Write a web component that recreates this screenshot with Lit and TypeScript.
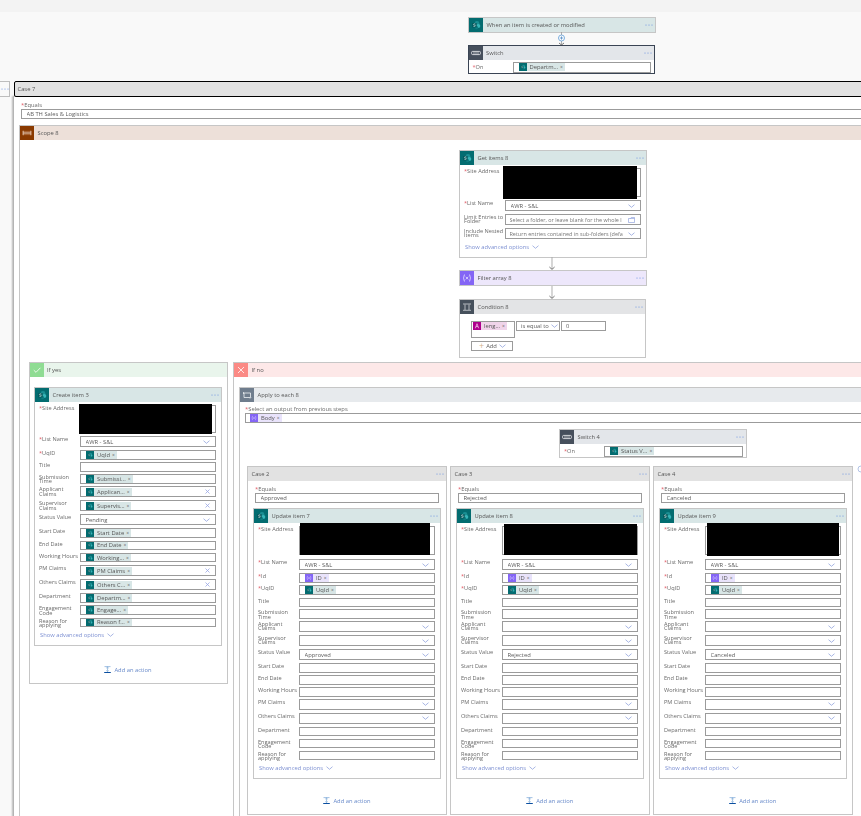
import { LitElement, html, css, nothing } from "lit";
import { customElement } from "lit/decorators.js";

const dots = html`<svg class="dots" width="8" height="2" viewBox="0 0 8 2"><circle cx="1" cy="1" r=".55"/><circle cx="4" cy="1" r=".55"/><circle cx="7" cy="1" r=".55"/></svg>`;
const chev = html`<svg class="chev" width="7" height="4" viewBox="0 0 7 4"><path d="M.5.7 3.5 3.3 6.5.7" fill="none" stroke="#8296d8" stroke-width=".7"/></svg>`;
const clear = html`<svg class="chev" width="5" height="5" viewBox="0 0 5 5"><path d="M.5.5 4.5 4.5M4.5.5.5 4.5" fill="none" stroke="#98a6e4" stroke-width=".8"/></svg>`;
const folder = html`<svg class="chev" width="7" height="6" viewBox="0 0 7 6"><path d="M.5 5.5V1.5H6.5V5.5ZM2.5 1.5 3.2.5H6.5V1.5" fill="none" stroke="#8296d8" stroke-width=".6"/></svg>`;

const spIcon = (s: number) => html`<svg class="ic" width="${s}" height="${s}" viewBox="0 0 14 14">
  <rect width="14" height="14" fill="#036c70"/>
  <circle cx="8" cy="5.5" r="2.4" fill="#1b8f93"/><circle cx="9.3" cy="8" r="2" fill="#37b5b8"/><circle cx="7.6" cy="9.6" r="1.6" fill="#0f7c80"/>
  <rect x="3.2" y="5" width="4.4" height="4.4" fill="#04585c"/><path d="M6.4 6C5.8 5.6 4.5 5.7 4.5 6.4 4.5 7.2 6.4 6.9 6.4 7.8 6.4 8.5 5 8.6 4.3 8.2" fill="none" stroke="#e8f4f4" stroke-width=".6"/></svg>`;
const fxIcon = (s: number) => html`<svg class="ic" width="${s}" height="${s}" viewBox="0 0 14 14"><rect width="14" height="14" fill="#8465f5"/>
  <path d="M5 3.5C3.8 3.5 4.2 6.2 3.4 7 4.2 7.8 3.8 10.5 5 10.5M9 3.5C10.2 3.5 9.8 6.2 10.6 7 9.8 7.8 10.2 10.5 9 10.5M5.8 5.8 8.2 8.4M8.2 5.8 5.8 8.4" fill="none" stroke="#e9e2ff" stroke-width=".8"/></svg>`;
const exprIcon = (s: number) => html`<svg class="ic" width="${s}" height="${s}" viewBox="0 0 14 14"><rect width="14" height="14" fill="#ad008c"/><path d="M4 11 7 3 10 11M5.2 8H8.8" fill="none" stroke="#f7d8ef" stroke-width="1.2"/></svg>`;
const switchIcon = html`<svg class="ic" width="14" height="14" viewBox="0 0 14 14"><rect width="14" height="14" fill="#464f5c"/><rect x="2.6" y="5.4" width="8.8" height="3.2" rx="1" fill="none" stroke="#f2f3f5" stroke-width=".8"/><path d="M5 5.6V8.4M7 5.6V8.4M9 5.6V8.4" stroke="#f2f3f5" stroke-width=".6"/></svg>`;
const scopeIcon = html`<svg class="ic" width="14" height="14" viewBox="0 0 14 14"><rect width="14" height="14" fill="#8a3a00"/><path d="M3.2 4.8V9.2M10.8 4.8V9.2M3.2 7H10.8" fill="none" stroke="#f1dfd2" stroke-width="1"/><rect x="3.2" y="5.2" width="7.6" height="3.6" fill="none" stroke="#c9966f" stroke-width=".5"/></svg>`;
const condIcon = html`<svg class="ic" width="14" height="14" viewBox="0 0 14 14"><rect width="14" height="14" fill="#46505c"/><path d="M3 4H11M3 10.3H11M5 4.5V10M9 4.5V10" fill="none" stroke="#cfd3d8" stroke-width=".8"/></svg>`;
const loopIcon = html`<svg class="ic" width="14" height="14" viewBox="0 0 14 14"><rect width="14" height="14" fill="#6f7d8d"/><path d="M4 5H10.5V9.5H4V5M3 6 4 5 3 4M10 10.5 11 9.5" fill="none" stroke="#eef1f4" stroke-width=".8"/></svg>`;
const yesIcon = html`<svg class="ic" width="14" height="14" viewBox="0 0 14 14"><rect width="14" height="14" fill="#8fdc93"/><path d="M3.8 7.2 6 9.3 10.4 4.8" fill="none" stroke="#f2fbf2" stroke-width=".9"/></svg>`;
const noIcon = html`<svg class="ic" width="14" height="14" viewBox="0 0 14 14"><rect width="14" height="14" fill="#fb8a85"/><path d="M4 4 10 10M10 4 4 10" fill="none" stroke="#fff2f1" stroke-width=".9"/></svg>`;
const addIcon = html`<svg width="7" height="7" viewBox="0 0 7 7"><path d="M.5 .6H6.5" stroke="#7aa6d8" stroke-width=".7"/><path d="M3.5 1V5.6M2.2 4.4 3.5 5.6 4.8 4.4M2.2 2.2 3.5 1 4.8 2.2" fill="none" stroke="#6f9fd2" stroke-width=".6"/><path d="M.2 6.5H6.8" stroke="#0b4fa0" stroke-width="1"/></svg>`;

type Row = [string, "in" | "dd" | "ddx" | "folder" | "ph", boolean, string?, string?, string?];

const updateRows = (status: string): Row[] => [
  ["List Name", "dd", true, "AWR - S&L"],
  ["Id", "in", true, undefined, "ID", "fx"],
  ["UqID", "in", true, undefined, "UqId", "sp"],
  ["Title", "in", false],
  ["Submission\nTime", "in", false],
  ["Applicant\nClaims", "dd", false],
  ["Supervisor\nClaims", "dd", false],
  ["Status Value", "dd", false, status],
  ["Start Date", "in", false],
  ["End Date", "in", false],
  ["Working Hours", "in", false],
  ["PM Claims", "dd", false],
  ["Others Claims", "dd", false],
  ["Department", "in", false],
  ["Engagement\nCode", "in", false],
  ["Reason for\napplying", "in", false],
];
const createRows: Row[] = [
  ["List Name", "dd", true, "AWR - S&L"],
  ["UqID", "in", true, undefined, "UqId", "sp"],
  ["Title", "in", false],
  ["Submission\nTime", "in", false, undefined, "Submissi...", "sp"],
  ["Applicant\nClaims", "ddx", false, undefined, "Applican...", "sp"],
  ["Supervisor\nClaims", "ddx", false, undefined, "Supervis...", "sp"],
  ["Status Value", "dd", false, "Pending"],
  ["Start Date", "in", false, undefined, "Start Date", "sp"],
  ["End Date", "in", false, undefined, "End Date", "sp"],
  ["Working Hours", "in", false, undefined, "Working...", "sp"],
  ["PM Claims", "ddx", false, undefined, "PM Claims", "sp"],
  ["Others Claims", "ddx", false, undefined, "Others C...", "sp"],
  ["Department", "in", false, undefined, "Departm...", "sp"],
  ["Engagement\nCode", "in", false, undefined, "Engage...", "sp"],
  ["Reason for\napplying", "in", false, undefined, "Reason f...", "sp"],
];
const getRows: Row[] = [
  ["List Name", "dd", true, "AWR - S&L"],
  ["Limit Entries to\nFolder", "folder", false, "Select a folder, or leave blank for the whole l"],
  ["Include Nested\nItems", "ph", false, "Return entries contained in sub-folders (defa"],
];

const token = (text: string, kind = "sp") => html`<span class="tk ${kind}">${kind === "sp" ? spIcon(8) : kind === "fx" ? fxIcon(8) : exprIcon(8)}<span class="tt">${text}</span><span class="tx">×</span></span>`;
const ttl = (t: string) => html`<span class="ttl">${t}</span>`;

const pos = (x: number, y: number, w: number, h?: number) =>
  `left:${x}px;top:${y}px;width:${w}px;${h ? `height:${h}px` : ""}`;

@customElement("app-root")
export class AppRoot extends LitElement {
  static styles = css`
    :host { display: block; width: 861px; height: 816px; overflow: hidden; font-family: "Open Sans", "Noto Sans", sans-serif; font-size: 5.8px; color: #555; }
    .canvas { position: relative; width: 861px; height: 816px; overflow: hidden; background: #f9f9f9; }
    .band { height: 12px; background: #f3f3f3; }
    .node { position: absolute; box-sizing: border-box; border: 1px solid #c6c6c6; background: #fff; }
    .head { display: flex; align-items: center; height: 14px; }
    .head .ic { flex: none; }
    .ttl { margin-left: 3.5px; flex: 1; white-space: nowrap; color: #555; filter: blur(.25px); }
    .ic { display: block; }
    .dots { fill: #5f8be0; margin-right: 2px; flex: none; }
    .sp-h { background: #d8e6e6; }
    .sw-h { background: #e3e6ea; }
    .fx-h { background: #ede7fb; }
    .cd-h { background: #e3e4e6; }
    .sc-h { background: #ede0d9; }
    .ap-h { background: #e7eaed; }
    .ys-h { background: #e9f5ec; }
    .no-h { background: #fde8e8; }
    .cs-h { background: #e2e2e2; }
    .dark { border-color: #3a4454; }
    .body { padding: 3px 5px 5px 4px; }
    .row { display: flex; }
    .row.s { height: 9.5px; margin-bottom: 2.4px; }
    .row.t { height: 9.5px; margin-bottom: 2.75px; }
    .row.d { height: 11px; margin-bottom: 3px; }
    .lbl { width: 41px; flex: none; white-space: pre; line-height: 4.2px; padding-top: 1px; color: #6a6a6a; filter: blur(.25px); font-size: 5.6px; }
    .req { color: #e2606a; }
    .inp { flex: 1; min-width: 0; box-sizing: border-box; display: flex; align-items: center; border: 1px solid #9b9b9b; background: #fff; padding-left: 5px; overflow: hidden; }
    .itxt { flex: 1; min-width: 0; margin-left: -.5px; white-space: nowrap; overflow: hidden; color: #5c5c5c; filter: blur(.25px); }
    .ph { font-size: 5.45px; color: #777; margin-left: -1.5px; }
    .fill { flex: 1; }
    .chev { flex: none; margin: 0 5px 0 1px; }
    .tk { display: inline-flex; align-items: center; height: 8px; background: #d8e6e6; white-space: nowrap; padding-right: 2px; flex: none; }
    .tk.fx { background: #e9e3fb; }
    .tk.ex { background: #f0d4ea; }
    .tt { margin-left: 3px; color: #555; filter: blur(.25px); }
    .tx { margin-left: 2px; color: #666; font-size: 5px; }
    .black { position: absolute; background: #000; }
    .adv { display: flex; align-items: center; height: 10px; padding-left: 1px; color: #7d90d2; white-space: nowrap; filter: blur(.25px); }
    .adv .chev { margin-left: 3px; }
    .frame { display: flex; flex-direction: column; }
    .fbody { flex: 1; display: flex; flex-direction: column; align-items: stretch; }
    .add { margin-top: auto; margin-bottom: 8px; height: 10px; display: flex; align-items: center; justify-content: center; gap: 3px; color: #6487c8; filter: blur(.2px); }
    .eq { padding: 4px 7px 0 7px; }
    .eq .lb { line-height: 8px; height: 8px; color: #6a6a6a; filter: blur(.25px); }
    .eq .inp { height: 10px; flex: none; }
    .case7 { box-shadow: -1px 0 1.5px rgba(0, 0, 0, .25); border-left-color: #b4b4b4; }
    .sel { position: absolute; box-sizing: border-box; border: 1.6px solid #000; border-radius: 2px; background: #e2e2e2; display: flex; align-items: center; padding-left: 3px; }
    .tab { position: absolute; box-sizing: border-box; border: 1px solid #bdbdbd; background: #f9f9f9; display: flex; align-items: center; padding-left: 1px; }
    .tab .dots { margin: 0; }
    .on { display: flex; padding: 2px 3px 0 4px; }
    .on .lbl { width: 40px; padding-top: 3px; }
    .on .inp { height: 10.5px; }
    .cond { position: relative; height: 44px; }
    .cbox { position: absolute; box-sizing: border-box; border: 1px solid #9b9b9b; background: #fff; display: flex; align-items: center; white-space: nowrap; color: #5c5c5c; }
    .cbox .itxt { flex: none; margin-left: 4px; }
    .cbox.t { align-items: flex-start; padding: 0 0 0 1px; }
    .cbox .chev { margin: 0 0 0 2px; }
    .plus { color: #d2b48c; margin: 0 2px 0 7px; font-size: 9px; line-height: 8px; }
    .wire { position: absolute; display: block; }
  `;

  private fields(rows: Row[]) {
    return rows.map(([label, kind, req, value, tk, tkKind]) => {
      const tall = kind !== "in";
      const cls = tall ? "d" : tk ? "t" : "s";
      const ph = kind === "folder" || kind === "ph";
      return html`<div class="row ${cls}">
        <div class="lbl">${req ? html`<span class="req">*</span>` : nothing}${label}</div>
        <div class="inp">
          ${tk ? html`${token(tk, tkKind)}<span class="fill"></span>` : html`<span class="itxt ${ph ? "ph" : ""}">${value ?? ""}</span>`}
          ${kind === "dd" || kind === "ph" ? chev : kind === "ddx" ? clear : kind === "folder" ? folder : nothing}
        </div>
      </div>`;
    });
  }

  private formCard(title: string, x: number, y: number, rows: Row[], siteH: number, siteGap: number, b: number[]) {
    return html`<div class="node" style=${pos(x, y, 188)}>
      <div class="head sp-h">${spIcon(14)}${ttl(title)}${dots}</div>
      <div class="body">
        <div class="row" style="height:${siteH}px;margin-bottom:${siteGap}px">
          <div class="lbl"><span class="req">*</span>Site Address</div><div class="inp"></div>
        </div>
        ${this.fields(rows)}
        <div class="adv">Show advanced options ${chev}</div>
      </div>
      <div class="black" style=${pos(b[0], b[1], b[2], b[3])}></div>
    </div>`;
  }

  private hdrCard(title: string, x: number, y: number, h: number, cls: string, icon: unknown) {
    return html`<div class="node" style=${pos(x, y, 187.5, h)}><div class="head ${cls}">${icon}${ttl(title)}${dots}</div></div>`;
  }

  private switchCard(x: number, y: number, w: number, title: string, tk: string, dark: boolean) {
    return html`<div class="node ${dark ? "dark" : ""}" style=${pos(x, y, w)}>
      <div class="head sw-h">${switchIcon}${ttl(title)}${dots}</div>
      <div class="on"><div class="lbl"><span class="req">*</span>On</div><div class="inp">${token(tk)}</div></div>
    </div>`;
  }

  private caseFrame(x: number, w: number, title: string, val: string) {
    return html`<div class="node frame" style=${pos(x, 465.5, w, 349)}>
      <div class="head cs-h">${ttl(title)}${dots}</div>
      <div class="fbody">
        <div class="eq"><div class="lb"><span class="req">*</span>Equals</div><div class="inp"><span class="itxt">${val}</span></div></div>
        <div class="add">${addIcon}<span>Add an action</span></div>
      </div>
    </div>`;
  }

  render() {
    return html`<div class="canvas">
      <div class="band"></div>

      ${this.hdrCard("When an item is created or modified", 468, 17, 15.5, "sp-h", spIcon(14))}
      <svg class="wire" style=${pos(556, 32, 12, 14)} viewBox="0 0 12 14">
        <path d="M5.5 0V13" stroke="#9a9a9a" stroke-width=".8"/>
        <circle cx="5.5" cy="6" r="3" fill="#fff" stroke="#5b9bd5" stroke-width=".8"/><path d="M3.9 6H7.1M5.5 4.4V7.6" stroke="#3f7fbf" stroke-width=".7"/>
        <path d="M3 11 5.5 13 8 11" fill="none" stroke="#555" stroke-width=".8"/>
      </svg>
      ${this.switchCard(467.5, 45, 187.5, "Switch", "Departm...", true)}

      <div class="tab" style=${pos(-1, 81, 10.7, 16)}>${dots}</div>
      <div class="node frame case7" style=${pos(13, 96, 1000, 800)}>
        <div class="eq"><div class="lb"><span class="req">*</span>Equals</div><div class="inp"><span class="itxt">AB TH Sales &amp; Logistics</span></div></div>
      </div>
      <div class="sel" style=${pos(13.5, 81, 1000, 16)}><span class="ttl" style="margin:0">Case 7</span></div>

      <div class="node" style=${pos(19, 125, 1000, 800)}>
        <div class="head sc-h">${scopeIcon}${ttl("Scope 8")}</div>
      </div>

      ${this.formCard("Get items 8", 459, 150, getRows, 28.5, 3.5, [43, 15, 134, 33])}
      <svg class="wire" style=${pos(548, 257, 8, 13)} viewBox="0 0 8 13"><path d="M3.6 0V12M4.4 0V12" stroke="#a8a8a8" stroke-width=".5"/><path d="M1.4 10 4 12.4 6.6 10" fill="none" stroke="#555" stroke-width=".8"/></svg>
      ${this.hdrCard("Filter array 8", 459, 270, 16, "fx-h", fxIcon(14))}
      <svg class="wire" style=${pos(548, 286, 8, 13)} viewBox="0 0 8 13"><path d="M3.6 0V12M4.4 0V12" stroke="#a8a8a8" stroke-width=".5"/><path d="M1.4 10 4 12.4 6.6 10" fill="none" stroke="#555" stroke-width=".8"/></svg>
      <div class="node" style=${pos(459, 299, 187, 59)}>
        <div class="head cd-h">${condIcon}${ttl("Condition 8")}${dots}</div>
        <div class="cond">
          <div class="cbox t" style=${pos(11, 6.5, 43.5, 17.5)}>${token("leng...", "ex")}</div>
          <div class="cbox" style=${pos(56, 6.5, 44, 10.5)}><span class="itxt">is equal to</span>${chev}</div>
          <div class="cbox" style=${pos(101, 6.5, 44.5, 10.5)}><span class="itxt">0</span></div>
          <div class="cbox" style=${pos(11, 27, 42, 10)}><span class="plus">+</span><span class="itxt" style="margin:0">Add</span>${chev}</div>
        </div>
      </div>

      <div class="node frame" style=${pos(28.5, 361.5, 199, 322)}>
        <div class="head ys-h">${yesIcon}${ttl("If yes")}</div>
        <div class="fbody"><div class="add">${addIcon}<span>Add an action</span></div></div>
      </div>
      ${this.formCard("Create item 3", 34, 387, createRows, 28, 3, [44, 16, 133, 30])}

      <div class="node" style=${pos(233, 361.5, 800, 600)}>
        <div class="head no-h">${noIcon}${ttl("If no")}</div>
      </div>
      <div class="node" style=${pos(239, 386.5, 800, 600)}>
        <div class="head ap-h">${loopIcon}${ttl("Apply to each 8")}</div>
        <div class="eq" style="padding:3px 0 0 5px"><div class="lb"><span class="req">*</span>Select an output from previous steps</div>
          <div class="inp" style="padding-left:4px">${token("Body", "fx")}</div></div>
      </div>
      ${this.switchCard(559, 429, 187.5, "Switch 4", "Status V...", false)}

      ${this.caseFrame(247, 200, "Case 2", "Approved")}
      ${this.caseFrame(450, 199.5, "Case 3", "Rejected")}
      ${this.caseFrame(653, 199.5, "Case 4", "Canceled")}
      ${this.formCard("Update item 7", 253, 508, updateRows("Approved"), 29, 4, [46, 14, 130, 32])}
      ${this.formCard("Update item 8", 456, 508, updateRows("Rejected"), 29, 4, [47, 15, 133, 31])}
      ${this.formCard("Update item 9", 659, 508, updateRows("Canceled"), 29, 4, [47, 14, 132, 33])}

      <svg class="wire" style=${pos(857, 465, 4, 8)} viewBox="0 0 4 8"><circle cx="4" cy="4" r="3" fill="none" stroke="#9fb4e0" stroke-width=".8"/></svg>
    </div>`;
  }
}
